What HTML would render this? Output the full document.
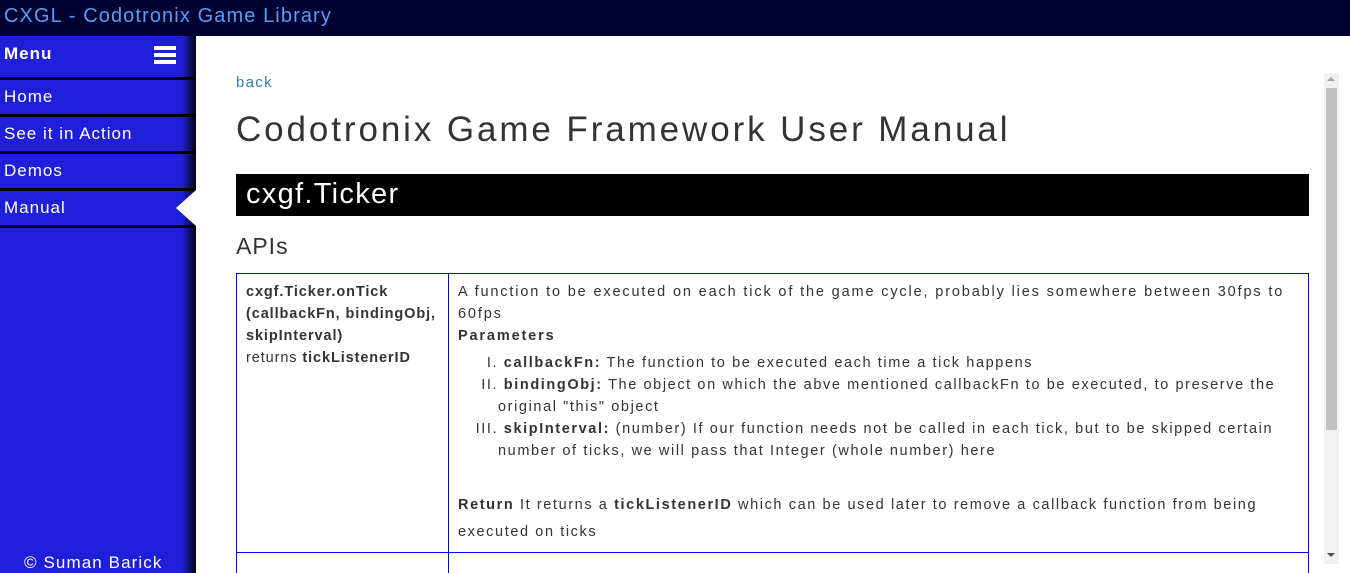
<!DOCTYPE html>
<html><head><style>
*{margin:0;padding:0;box-sizing:border-box}
html,body{width:1350px;height:573px;overflow:hidden}
body{background:#fff;font-family:"Liberation Sans",sans-serif;position:relative}
#hdr{position:absolute;left:0;top:0;width:1350px;height:36px;background:#000033;color:#5b9ef0;font-size:20px;line-height:32px;padding-left:4px;letter-spacing:1.1px}
#side{position:absolute;left:0;top:36px;width:196px;height:537px;background:#1f1fd9;color:#fff}
#side:after{content:"";position:absolute;right:0;top:0;width:14px;height:100%;background:linear-gradient(to right,rgba(0,0,0,0),rgba(0,0,0,.95))}
.mi{position:absolute;left:0;width:196px;height:37px;border-bottom:3px solid #000;font-size:17px;line-height:34px;padding-left:4px;letter-spacing:1px}
#burger{position:absolute;left:154px;top:10px;width:22px}
#burger div{height:4px;background:#fff;margin-bottom:3px}
#arrow{position:absolute;left:176px;top:190px;width:0;height:0;border-top:18px solid transparent;border-bottom:18px solid transparent;border-right:20px solid #fff;z-index:2}
#copy{position:absolute;left:24px;bottom:0;font-size:17px;letter-spacing:1.1px}
#back{position:absolute;left:236px;top:74px;color:#337ab7;font-size:15px;letter-spacing:1.3px}
h1{position:absolute;left:236px;top:110px;font-size:35px;font-weight:normal;color:#333;letter-spacing:2.9px;white-space:nowrap}
#bar{position:absolute;left:236px;top:174px;width:1073px;height:42px;background:#000;color:#fff;font-size:29px;line-height:40px;padding-left:10px;letter-spacing:1.3px}
h2{position:absolute;left:236px;top:233px;font-size:23px;font-weight:normal;color:#333;letter-spacing:1px}
#tbl{position:absolute;left:236px;top:273px;width:1073px;height:310px;border:1px solid #00f}
#vl{position:absolute;left:448px;top:273px;width:1px;height:300px;background:#00f}
#hl{position:absolute;left:236px;top:552px;width:1073px;height:1px;background:#00f}
.t{position:absolute;font-size:14.5px;color:#333;letter-spacing:1.85px;white-space:nowrap;line-height:22px}
.l{letter-spacing:.9px}
.li{letter-spacing:1.6px}
b{color:#333}
#sb{position:absolute;left:1324px;top:73px;width:15px;height:491px;background:#f1f1f1}
#th{position:absolute;left:1326px;top:88px;width:11px;height:342px;background:#c1c1c1}
</style></head><body>
<div id="hdr">CXGL - Codotronix Game Library</div>
<div id="side">
<div class="mi" style="top:0;height:44px;line-height:36px;font-weight:bold">Menu</div>
<div id="burger"><div></div><div></div><div></div></div>
<div class="mi" style="top:44px">Home</div>
<div class="mi" style="top:81px">See it in Action</div>
<div class="mi" style="top:118px">Demos</div>
<div class="mi" style="top:155px">Manual</div>
<div id="copy">© Suman Barick</div>
</div>
<div id="arrow"></div>
<div id="back">back</div>
<h1>Codotronix Game Framework User Manual</h1>
<div id="bar">cxgf.Ticker</div>
<h2>APIs</h2>
<div id="tbl"></div><div id="vl"></div><div id="hl"></div>
<div class="t l" style="left:246px;top:281px"><b>cxgf.Ticker.onTick</b><br><b>(callbackFn, bindingObj,</b><br><b>skipInterval)</b><br>returns <b>tickListenerID</b></div>
<div class="t" style="left:458px;top:281px">A function to be executed on each tick of the game cycle, probably lies somewhere between 30fps to<br>60fps<br><b>Parameters</b></div>
<div class="t li" style="left:470px;top:352px">&nbsp;&nbsp;&nbsp;I. <b>callbackFn:</b> The function to be executed each time a tick happens</div>
<div class="t li" style="left:470px;top:374px">&nbsp;&nbsp;II. <b>bindingObj:</b> The object on which the abve mentioned callbackFn to be executed, to preserve the</div>
<div class="t li" style="left:498px;top:396px">original "this" object</div>
<div class="t li" style="left:470px;top:418px">&nbsp;III. <b>skipInterval:</b> (number) If our function needs not be called in each tick, but to be skipped certain</div>
<div class="t li" style="left:498px;top:440px">number of ticks, we will pass that Integer (whole number) here</div>
<div class="t li" style="left:458px;top:494px"><b>Return</b> It returns a <b>tickListenerID</b> which can be used later to remove a callback function from being</div>
<div class="t li" style="left:458px;top:521px">executed on ticks</div>
<div id="sb"></div><div id="th"></div>
<div style="position:absolute;left:1327px;top:77px;border-left:4px solid transparent;border-right:4px solid transparent;border-bottom:4px solid #a3a3a3"></div>
<div style="position:absolute;left:1327px;top:553px;border-left:4px solid transparent;border-right:4px solid transparent;border-top:4px solid #505050"></div>
</body></html>
